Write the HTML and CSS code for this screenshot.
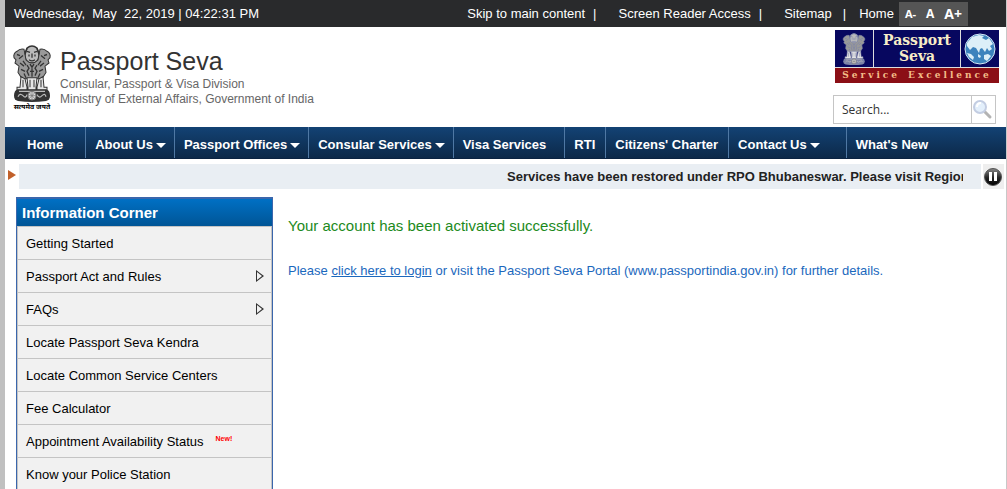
FILE: index.html
```html
<!DOCTYPE html>
<html lang="en">
<head>
    <meta charset="UTF-8">
    <meta name="viewport" content="width=device-width, initial-scale=1.0">
    <title>Passport Seva</title>
    <link rel="stylesheet" href="styles.css">
</head>
<body>
    <!-- State emblem, shared by the header and the banner -->
    <svg class="sprite" aria-hidden="true">
        <symbol id="emblem" viewBox="0 0 40 54" preserveAspectRatio="none">
            <path d="M15 3q5-4 10 0l2 5q1 5-3 9h-8q-4-4-3-9z" fill="#bbb" stroke="currentColor" stroke-width="1.5"/>
            <path d="M12 4Q8 3 5 6Q1 8 2 12l2 2l-1 3l4 3l-1 6l4 6h20l4-6l-1-6l4-3l-1-3l2-2q1-4-3-6q-3-3-7-2l-2 10q-6 6-12 0z" fill="#999" stroke="currentColor" stroke-width="1"/>
            <path d="M15 6l3 1M25 6l-3 1M17 9v2M23 9v2M20 8v4M17 14q3 2 6 0M15 3l-2 6M25 3l2 6M5 9l3 1M35 9l-3 1M7 13l4-3M33 13l-4-3M8 17l4 3M32 17l-4 3M11 15l3 4M29 15l-3 4M9 23l4 2M31 23l-4 2M15 19l2 3l-2 3l2 4M25 19l-2 3l2 3l-2 4M18 18l2 3l2-3M20 22v8M18 25h4M12 27l2 4M28 27l-2 4" fill="none" stroke="currentColor" stroke-width="1.3"/>
            <path d="M9 30L8 40H5v3h10v-3l-2-8zM15 31l1 9v3h8v-3l1-9zM31 30l1 10h3v3H25v-3l2-8z" fill="#e6e6e6" stroke="currentColor" stroke-width="1"/>
            <path d="M11 33v7M18 33v7M22 33v7M29 33v7" stroke="currentColor" stroke-width="1"/>
            <path d="M6 42h28q4 1 4 6q0 4-4 5q-14 2-28 0q-4-1-4-5q0-5 4-6z" fill="currentColor"/>
            <path d="M6 49q2-4 5-1t4-1M25 47q2 4 5 1t4 1M7 44h26" fill="none" stroke="#bbb" stroke-width="1.2"/>
            <circle cx="20" cy="48" r="4" fill="#ddd" stroke="#777"/>
            <path d="M20 44v8M16 48h8M17 45l6 6M23 45l-6 6" stroke="#777" stroke-width=".7"/>
        </symbol>
    </svg>

    <div class="page">
        <div class="topbar">
            <span class="datetime">Wednesday,&nbsp; May&nbsp; 22, 2019 | 04:22:31 PM</span>
            <ul class="top-links">
                <li><a href="#content">Skip to main content</a></li>
                <li><a href="#">Screen Reader Access</a></li>
                <li><a href="#">Sitemap</a></li>
                <li><a href="#">Home</a></li>
            </ul>
            <div class="font-size">
                <button type="button" class="size-small">A-</button>
                <button type="button" class="size-normal">A</button>
                <button type="button" class="size-large">A+</button>
            </div>
        </div>

        <header class="header">
            <div class="brand">
                <div class="emblem">
                    <svg width="40" height="57" aria-hidden="true"><use href="#emblem"/></svg>
                    <span lang="hi">सत्यमेव जयते</span>
                </div>
                <div>
                    <h1>Passport Seva</h1>
                    <p>Consular, Passport &amp; Visa Division</p>
                    <p>Ministry of External Affairs, Government of India</p>
                </div>
            </div>
            <div class="header-right">
                <div class="banner">
                    <div class="banner-top">
                        <div class="banner-emblem">
                            <svg width="24" height="32" aria-hidden="true"><use href="#emblem"/></svg>
                        </div>
                        <div class="banner-name">Passport<br>Seva</div>
                        <div class="banner-globe">
                            <svg width="32" height="32" viewBox="0 0 32 32" aria-hidden="true">
                                <circle cx="16" cy="16" r="15" fill="#3c83bd" stroke="#d5e8f5" stroke-width="1"/>
                                <path d="M3 10L8 4l7-2l5 1l-2 2l4 2l3-2l4 6l-3 2l2 3l-3 2l-2-3l-2 4l-3-4l-2 1l-1 4l-3-5l-3-1l-3 3l-3-4zM3 20l4 1l3 3l-1 3l-4-3zM20 22l4-1l3 2l-4 5l-3-2zM14 21l3 2l-1 2l-2-1z" fill="#dceff8"/>
                            </svg>
                        </div>
                    </div>
                    <div class="banner-tag"><span>Service</span> <span>Excellence</span></div>
                </div>
                <form class="search">
                    <input type="text" aria-label="Search" value="Search...">
                    <button type="button" aria-label="Search">
                        <svg width="22" height="24" viewBox="0 0 22 24" aria-hidden="true">
                            <path d="M13 14l5 5" stroke="#b3b3b3" stroke-width="3" stroke-linecap="round"/>
                            <circle cx="8" cy="9" r="6" fill="#e3effb" stroke="#c3cde2" stroke-width="2"/>
                            <path d="M5 9q0-4 4-4" fill="none" stroke="#fff" stroke-width="2"/>
                        </svg>
                    </button>
                </form>
            </div>
        </header>

        <nav class="nav">
            <a href="#" class="nav-home">Home</a>
            <a href="#" class="has-menu">About Us</a>
            <a href="#" class="has-menu">Passport Offices</a>
            <a href="#" class="has-menu">Consular Services</a>
            <a href="#" class="nav-visa">Visa Services</a>
            <a href="#">RTI</a>
            <a href="#">Citizens' Charter</a>
            <a href="#" class="has-menu nav-contact">Contact Us</a>
            <a href="#">What's New</a>
        </nav>

        <div class="ticker">
            <span class="ticker-arrow"></span>
            <div class="ticker-track">
                <p>Services have been restored under RPO Bhubaneswar. Please visit Regional Passport Office</p>
            </div>
            <button type="button" class="ticker-pause" aria-label="Pause">
                <svg width="20" height="20" viewBox="0 0 20 20" aria-hidden="true">
                    <defs>
                        <linearGradient id="pauseFill" x1="0" y1="0" x2="0" y2="1">
                            <stop offset="0" stop-color="#888"/>
                            <stop offset=".55" stop-color="#222"/>
                            <stop offset="1" stop-color="#000"/>
                        </linearGradient>
                    </defs>
                    <circle cx="10" cy="10" r="8.5" fill="url(#pauseFill)" stroke="#555"/>
                    <path d="M6 5h3v9H6zM11 5h3v9h-3z" fill="#fff"/>
                </svg>
            </button>
        </div>

        <div class="main">
            <aside class="sidebar">
                <h2>Information Corner</h2>
                <ul>
                    <li><a href="#">Getting Started</a></li>
                    <li><a href="#" class="has-sub">Passport Act and Rules</a></li>
                    <li><a href="#" class="has-sub">FAQs</a></li>
                    <li><a href="#">Locate Passport Seva Kendra</a></li>
                    <li><a href="#">Locate Common Service Centers</a></li>
                    <li><a href="#">Fee Calculator</a></li>
                    <li><a href="#">Appointment Availability Status <sup>New!</sup></a></li>
                    <li><a href="#">Know your Police Station</a></li>
                </ul>
            </aside>
            <main class="content" id="content">
                <p class="success">Your account has been activated successfully.</p>
                <p class="info">Please <a href="#">click here to login</a> or visit the Passport Seva Portal (www.passportindia.gov.in) for further details.</p>
            </main>
        </div>
    </div>
</body>
</html>
```
FILE: styles.css
```css
* {
    margin: 0;
    padding: 0;
    box-sizing: border-box;
}

body {
    font-family: "Liberation Sans", Arial, sans-serif;
    font-size: 13px;
    background: #fff;
    height: 100vh;
    overflow: hidden;
}

a {
    color: inherit;
    text-decoration: none;
}

ul {
    list-style: none;
}

button {
    border: none;
    background: none;
    font-family: inherit;
    cursor: pointer;
}

svg {
    display: block;
}

.sprite {
    position: absolute;
    width: 0;
    height: 0;
}

.page {
    min-height: 100vh;
    border-left: 5px solid #c0c0c0;
    border-right: 1px solid #c8c8c8;
}

/* Top bar */
.topbar {
    display: flex;
    align-items: center;
    height: 27px;
    padding: 0 38px 0 9px;
    background: #292a2c;
    color: #fff;
}

.datetime {
    margin-right: auto;
}

.top-links {
    display: flex;
}

.top-links li:not(:last-child)::after {
    content: "|";
    margin: 0 22px 0 8px;
}

.top-links li:nth-child(3)::after {
    margin: 0 13px 0 11px;
}

.font-size {
    display: flex;
    align-items: center;
    gap: 10px;
    height: 24px;
    margin-left: 5px;
    padding: 0 6px;
    background: #555;
}

.font-size button {
    color: #fff;
    font-family: "Open Sans", sans-serif;
    font-weight: bold;
}

.size-small { font-size: 11px; }
.size-normal { font-size: 12px; }
.size-large { font-size: 14px; }

/* Header */
.header {
    display: flex;
    justify-content: space-between;
    height: 100px;
    padding: 3px 7px 0 7px;
}

.brand {
    display: flex;
    gap: 8px;
    padding-top: 15px;
}

.emblem {
    display: flex;
    flex-direction: column;
    align-items: center;
    width: 40px;
    color: #333;
}

.emblem span {
    color: #000;
    font-family: "Noto Sans", sans-serif;
    font-size: 7px;
    font-weight: bold;
    line-height: 9px;
    white-space: nowrap;
}

.brand h1 {
    color: #333;
    font-size: 25px;
    font-weight: normal;
    line-height: 32px;
}

.brand p {
    color: #666;
    font-size: 12px;
    line-height: 15px;
}

.header-right {
    display: flex;
    flex-direction: column;
    gap: 12px;
}

.banner {
    width: 164px;
}

.banner-top {
    display: grid;
    grid-template-columns: 38px 1fr 38px;
    height: 38px;
    background: #07075f;
    border-bottom: 1px solid #ddd;
}

.banner-emblem,
.banner-globe {
    display: flex;
    align-items: center;
    justify-content: center;
}

.banner-emblem {
    color: #7d84a8;
}

.banner-name {
    border: solid #ddd;
    border-width: 0 1px;
    padding-top: 2px;
    color: #f8edc8;
    font-family: "DejaVu Serif", serif;
    font-size: 14px;
    font-weight: bold;
    line-height: 16px;
    text-align: center;
}

.banner-tag {
    display: flex;
    justify-content: center;
    gap: 8px;
    background: #8b0f16;
    color: #f3bc88;
    font-family: "DejaVu Serif", serif;
    font-size: 9px;
    font-weight: bold;
    letter-spacing: 3px;
    line-height: 15px;
}

.search {
    display: flex;
    width: 163px;
    height: 29px;
    margin-left: -2px;
    border: 1px solid #c5c5c5;
}

.search input {
    flex: 1;
    min-width: 0;
    border: none;
    padding-left: 8px;
    color: #333;
    font-family: "Open Sans", sans-serif;
    font-size: 12px;
}

.search button {
    width: 24px;
    border-left: 1px solid #c5c5c5;
}

/* Main navigation */
.nav {
    display: flex;
    height: 32px;
    background: linear-gradient(#134274, #0c2949);
    border-bottom: 1px solid #0a2342;
    color: #fff;
    font-weight: bold;
}

.nav a {
    display: flex;
    align-items: center;
    gap: 3px;
    padding: 3px 10px 0 9px;
    white-space: nowrap;
}

.nav a + a {
    border-left: 1px solid #4f78a4;
}

.nav .nav-home { padding: 3px 22px 0 22px; }
.nav .nav-visa { padding-right: 18px; }
.nav .has-menu { padding-right: 8px; }
.nav .nav-contact { padding-right: 26px; }

.nav .has-menu::after {
    content: "";
    border: 5px solid transparent;
    border-top-color: #fff;
    border-bottom: none;
    margin-top: 2px;
}

/* Ticker */
.ticker {
    display: flex;
    align-items: center;
    gap: 2px;
    margin: 5px 2px 8px 3px;
}

.ticker-arrow {
    border: 5px solid transparent;
    border-left: 8px solid #c1602a;
    border-right: none;
    margin: 0 1px 4px 0;
}

.ticker-track {
    flex: 1;
    min-width: 0;
    height: 25px;
    padding-right: 18px;
    background: #e9eef3;
}

.ticker-track p {
    overflow: hidden;
    padding-left: 488px;
    color: #222;
    font-weight: bold;
    line-height: 25px;
    white-space: nowrap;
}

.ticker-pause {
    width: 21px;
    height: 25px;
    background: #eee;
}

/* Main area */
.main {
    display: flex;
    gap: 15px;
    padding-left: 11px;
}

.sidebar {
    width: 257px;
    border: 1px solid #3a66ac;
    border-top-width: 2px;
}

.sidebar h2 {
    padding-left: 5px;
    background: linear-gradient(#0070c4, #005596);
    color: #fff;
    font-size: 15px;
    line-height: 27px;
}

.sidebar ul {
    border: 1px solid #c4c4c4;
}

.sidebar li {
    border-bottom: 1px solid #c4c4c4;
    background: #f1f1f1;
}

.sidebar li a {
    display: flex;
    align-items: center;
    height: 32px;
    padding: 0 7px 0 8px;
    color: #000;
}

.sidebar .has-sub::after {
    content: "";
    width: 8px;
    height: 12px;
    margin-left: auto;
    background: #333;
    clip-path: polygon(evenodd, 0 0, 8px 6px, 0 12px, 0 0, 1px 2px, 1px 10px, 6px 6px, 1px 2px);
}

.sidebar sup {
    margin: 0 0 5px 12px;
    color: #f00;
    font-size: 7px;
    font-weight: bold;
}

.content {
    flex: 1;
    padding-top: 20px;
}

.success {
    margin-bottom: 28px;
    color: #1c8a1c;
    font-size: 15px;
    line-height: 18px;
}

.info {
    color: #1b68bd;
    line-height: 16px;
}

.info a {
    text-decoration: underline;
}
```
